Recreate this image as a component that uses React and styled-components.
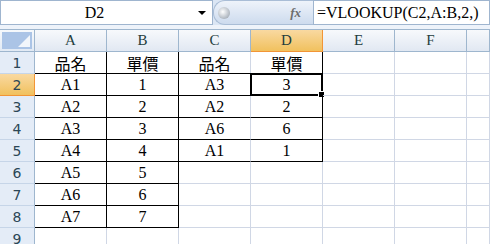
import styled, { createGlobalStyle, css } from 'styled-components';

const GlobalStyle = createGlobalStyle`
  html, body {
    margin: 0;
    padding: 0;
    background: #ffffff;
    overflow: hidden;
  }
`;

const columns = ['A', 'B', 'C', 'D', 'E', 'F', ''];

// cell data per row, columns A..G
const rows = [
  ['品名', '單價', '品名', '單價', '', '', ''],
  ['A1', '1', 'A3', '3', '', '', ''],
  ['A2', '2', 'A2', '2', '', '', ''],
  ['A3', '3', 'A6', '6', '', '', ''],
  ['A4', '4', 'A1', '1', '', '', ''],
  ['A5', '5', '', '', '', '', ''],
  ['A6', '6', '', '', '', '', ''],
  ['A7', '7', '', '', '', '', ''],
  ['', '', '', '', '', '', ''],
];

// which cells carry a black border on their right / bottom edge
const blackRight = (r, c) => (r < 8 && (c === 0 || c === 1)) || (r < 5 && c === 3);
const blackBottom = (r, c) => (r < 8 && (c === 0 || c === 1)) || (r < 5 && (c === 2 || c === 3));

const Page = styled.div`
  width: 490px;
  height: 244px;
  overflow: hidden;
  font-family: 'Liberation Serif', 'Noto Sans CJK TC', serif;
`;

const FormulaBar = styled.div`
  display: flex;
  height: 25px;
  background: #dbe6f4;
`;

const NameBox = styled.div`
  width: 213px;
  box-sizing: border-box;
  border: 1px solid #9fb5cf;
  background: #fff;
  display: flex;
  align-items: center;
  position: relative;
  font-size: 16px;
  color: #000;
`;

const NameText = styled.span`
  flex: 1;
  text-align: center;
  padding-right: 10px;
`;

const DropArrow = styled.span`
  width: 0;
  height: 0;
  border-left: 4px solid transparent;
  border-right: 4px solid transparent;
  border-top: 4px solid #000;
  margin-right: 6px;
`;

const Pill = styled.div`
  width: 100px;
  display: flex;
  align-items: center;
  justify-content: space-between;
  box-sizing: border-box;
  padding: 0 12px 0 0;
  border-radius: 12px 0 0 12px;
  border: 1px solid #a9bdd6;
  border-right: none;
  background: linear-gradient(#eef3fa, #cddbee);
`;

const Knob = styled.span`
  width: 12px;
  height: 12px;
  margin-left: 4px;
  border-radius: 50%;
  background: radial-gradient(circle at 40% 40%, #ffffff, #b9c0c8 60%, #8e969f);
`;

const Fx = styled.span`
  font-family: 'Liberation Serif', serif;
  font-style: italic;
  font-weight: bold;
  font-size: 13px;
  color: #6d6d6d;
`;

const FormulaInput = styled.div`
  flex: 1;
  box-sizing: border-box;
  border: 1px solid #9fb5cf;
  background: #fff;
  display: flex;
  align-items: center;
  padding-left: 3px;
  font-size: 16px;
  color: #000;
  white-space: nowrap;
`;

const Gap = styled.div`
  height: 4px;
  background: #eef3fa;
  border-bottom: 1px solid #9eb6ce;
`;

const Sheet = styled.div`
  display: grid;
  grid-template-columns: 35px repeat(6, 72px) 1fr;
  grid-auto-rows: 22px;
`;

const headerBase = css`
  box-sizing: border-box;
  display: flex;
  align-items: center;
  justify-content: center;
  font-size: 15px;
  color: #243d3d;
`;

const Corner = styled.div`
  box-sizing: border-box;
  border-right: 1px solid #9eb6ce;
  border-bottom: 1px solid #9eb6ce;
  background: linear-gradient(#f6f9fc, #e2eaf4);
  padding: 2px;
`;

const CornerInner = styled.div`
  height: 100%;
  background: #abc4e6;
  position: relative;
  overflow: hidden;
  &::after {
    content: '';
    position: absolute;
    right: 2px;
    bottom: 2px;
    width: 0;
    height: 0;
    border-left: 12px solid transparent;
    border-bottom: 12px solid #f2f6fb;
  }
`;

const ColHeader = styled.div`
  ${headerBase}
  border-right: 1px solid ${(p) => (p.$active ? '#f29536' : '#9eb6ce')};
  border-bottom: 1px solid ${(p) => (p.$active ? '#f29536' : '#9eb6ce')};
  background: ${(p) =>
    p.$active
      ? 'linear-gradient(#f9d9a1, #f1c15e)'
      : 'linear-gradient(#f7f9fc, #e1e8f2)'};
`;

const RowHeader = styled.div`
  ${headerBase}
  font-family: 'DejaVu Sans', sans-serif;
  font-size: 14px;
  border-right: 1px solid ${(p) => (p.$active ? '#f29536' : '#9eb6ce')};
  border-bottom: 1px solid ${(p) => (p.$active ? '#f29536' : '#c6d5e8')};
  background: ${(p) =>
    p.$active ? 'linear-gradient(#f9d9a1, #f1c15e)' : '#e4ecf7'};
  color: #2b4656;
`;

const Cell = styled.div`
  box-sizing: border-box;
  position: relative;
  display: flex;
  align-items: center;
  justify-content: center;
  font-size: 16px;
  color: #000;
  border-right: 1px solid ${(p) => (p.$right ? '#000' : '#d0d7e5')};
  border-bottom: 1px solid ${(p) => (p.$bottom ? '#000' : '#d0d7e5')};
  ${(p) =>
    p.$active &&
    css`
      &::before {
        content: '';
        position: absolute;
        left: -1px;
        top: -1px;
        right: -1px;
        bottom: -1px;
        border: 2px solid #000;
        box-shadow: inset 0 0 0 1px #fff;
      }
      &::after {
        content: '';
        position: absolute;
        right: -3px;
        bottom: -3px;
        width: 5px;
        height: 5px;
        background: #000;
        border: 1px solid #fff;
      }
    `}
`;

const App = () => {
  return (
    <Page>
      <GlobalStyle />
      <FormulaBar>
        <NameBox>
          <NameText>D2</NameText>
          <DropArrow />
        </NameBox>
        <Pill>
          <Knob />
          <Fx>fx</Fx>
        </Pill>
        <FormulaInput>=VLOOKUP(C2,A:B,2,)</FormulaInput>
      </FormulaBar>
      <Gap />
      <Sheet>
        <Corner>
          <CornerInner />
        </Corner>
        {columns.map((c, i) => (
          <ColHeader key={i} $active={c === 'D'}>
            {c}
          </ColHeader>
        ))}
        {rows.map((row, r) => [
          <RowHeader key={'h' + r} $active={r === 1}>
            {r + 1}
          </RowHeader>,
          ...row.map((v, c) => (
            <Cell
              key={r + '-' + c}
              $right={blackRight(r, c)}
              $bottom={blackBottom(r, c)}
              $active={r === 1 && c === 3}
            >
              {v}
            </Cell>
          )),
        ])}
      </Sheet>
    </Page>
  );
};

export default App;
